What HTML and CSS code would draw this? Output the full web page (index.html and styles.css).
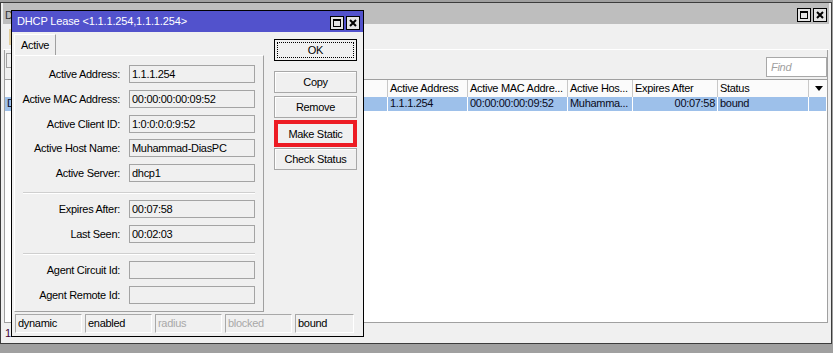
FILE: index.html
```html
<!DOCTYPE html>
<html lang="en">
<head>
    <meta charset="UTF-8">
    <title>DHCP Lease</title>
    <link rel="stylesheet" href="styles.css">
</head>
<body>

<div class="win">
    <div class="win-title">
        <span class="name">DHCP Server</span>
        <div class="tbtns">
            <span class="tb"><svg width="14" height="14"><rect x="0.5" y="0.5" width="13" height="13" fill="#e4e4e4" stroke="#000"/><rect x="3.5" y="3.5" width="7" height="7" fill="none" stroke="#000"/><line x1="3" y1="4.5" x2="11" y2="4.5" stroke="#000"/></svg></span>
            <span class="tb"><svg width="14" height="14"><rect x="0.5" y="0.5" width="13" height="13" fill="#e4e4e4" stroke="#000"/><path d="M4 4 L10 10 M10 4 L4 10" stroke="#000" stroke-width="2"/></svg></span>
        </div>
    </div>
    <div class="win-tabs"><span class="wtab"></span></div>
    <div class="page">
        <div class="toolbar">
            <span class="tool"></span>
            <span class="find">Find</span>
        </div>
        <div class="list">
            <div class="lrow head">
                <div class="c"></div>
                <div class="c">Active Address</div>
                <div class="c">Active MAC Addre...</div>
                <div class="c">Active Hos...</div>
                <div class="c">Expires After</div>
                <div class="c">Status</div>
                <div class="c arrow"><span class="tri"></span></div>
            </div>
            <div class="lrow sel">
                <div class="c">D</div>
                <div class="c">1.1.1.254</div>
                <div class="c">00:00:00:00:09:52</div>
                <div class="c">Muhamma...</div>
                <div class="c num">00:07:58</div>
                <div class="c">bound</div>
                <div class="c"></div>
            </div>
        </div>
    </div>
    <div class="win-status">1</div>
</div>

<div class="dlg">
    <div class="dlg-title">
        <span class="name">DHCP Lease &lt;1.1.1.254,1.1.1.254&gt;</span>
        <div class="tbtns">
            <span class="tb"><svg width="14" height="14"><rect x="0.5" y="0.5" width="13" height="13" fill="#e4e4e4" stroke="#000"/><rect x="3.5" y="3.5" width="7" height="7" fill="none" stroke="#000"/><line x1="3" y1="4.5" x2="11" y2="4.5" stroke="#000"/></svg></span>
            <span class="tb"><svg width="14" height="14"><rect x="0.5" y="0.5" width="13" height="13" fill="#e4e4e4" stroke="#000"/><path d="M4 4 L10 10 M10 4 L4 10" stroke="#000" stroke-width="2"/></svg></span>
        </div>
    </div>
    <div class="dlg-body">
        <div class="pane">
            <div class="tabs"><span class="tab">Active</span></div>
            <div class="panel">
                <div class="field"><label>Active Address:</label><span class="val">1.1.1.254</span></div>
                <div class="field"><label>Active MAC Address:</label><span class="val">00:00:00:00:09:52</span></div>
                <div class="field"><label>Active Client ID:</label><span class="val">1:0:0:0:0:9:52</span></div>
                <div class="field"><label>Active Host Name:</label><span class="val">Muhammad-DiasPC</span></div>
                <div class="field"><label>Active Server:</label><span class="val">dhcp1</span></div>
                <div class="sep"></div>
                <div class="field"><label>Expires After:</label><span class="val">00:07:58</span></div>
                <div class="field"><label>Last Seen:</label><span class="val">00:02:03</span></div>
                <div class="sep"></div>
                <div class="field"><label>Agent Circuit Id:</label><span class="val"></span></div>
                <div class="field"><label>Agent Remote Id:</label><span class="val"></span></div>
            </div>
        </div>
        <div class="btns">
            <button class="ok">OK</button>
            <button class="first">Copy</button>
            <button>Remove</button>
            <button class="marked">Make Static</button>
            <button class="after">Check Status</button>
        </div>
        <div class="dstatus">
            <span>dynamic</span>
            <span>enabled</span>
            <span class="off">radius</span>
            <span class="off">blocked</span>
            <span>bound</span>
        </div>
    </div>
</div>

</body>
</html>
```

FILE: styles.css
```css
* { box-sizing: border-box; }
body { margin: 0; height: 353px; overflow: hidden; position: relative; background: #a0a0a0; font-family: "Liberation Sans", Arial, sans-serif; font-size: 11px; letter-spacing: -0.3px; color: #000; }

/* background window */
.win { margin-top: 2px; width: 832px; height: 342px; border: 1px solid #3c3c3c; background: #f0f0f0; padding: 0 2px; display: flex; flex-direction: column; }
.win-title { height: 21px; flex: none; background: #bebebe; color: #333; display: flex; justify-content: space-between; align-items: flex-end; padding: 0 2px 2px 2px; }
.win-title .name { white-space: nowrap; line-height: 13px; }
.dlg-title .name { align-self: center; white-space: nowrap; }
.tbtns { display: flex; gap: 2px; }
.tb { width: 14px; height: 14px; display: block; }
.tb svg { display: block; }
.win-tabs { height: 26px; flex: none; border-bottom: 1px solid #fff; padding: 5px 0 0 6px; }
.wtab { display: inline-block; width: 40px; height: 16px; border-left: 2px solid #e3cf9c; border-right: 1px solid #a0a0a0; }
.page { flex: 1; margin: 0 1px; border: 1px solid #a0a0a0; border-top: none; display: flex; flex-direction: column; }
.toolbar { height: 29px; flex: none; display: flex; justify-content: space-between; align-items: flex-end; padding-bottom: 2px; }
.tool { align-self: flex-start; margin: 3px 0 0 1px; width: 22px; height: 15px; border: 1px solid #a0a0a0; position: relative; }
.tool::before { content: ""; position: absolute; left: 4px; top: 9px; width: 2px; height: 2px; background: #000; }
.find { width: 61px; height: 20px; background: #fff; border: 1px solid #a8a8a8; color: #a0a0a0; font-style: italic; padding: 2px 4px; line-height: 14px; }
.list { flex: 1; background: #fff; border-top: 1px solid #a0a0a0; }
.lrow { display: grid; grid-template-columns: 383px 80px 100px 65px 85px 91px 1fr; }
.lrow .c { padding-left: 2px; white-space: nowrap; overflow: hidden; border-right: 1px solid #fff; }
.head { height: 17px; background: #fbfbfb; line-height: 17px; }
.head .c { border-right-color: #c8c8c8; }
.head .arrow { border-right: none; display: flex; align-items: center; justify-content: center; }
.tri { width: 0; height: 0; border-left: 4px solid transparent; border-right: 4px solid transparent; border-top: 5px solid #000; }
.sel { height: 14px; background: #9dc0ea; line-height: 13px; color: #0a0a20; }
.sel .num { text-align: right; padding-right: 2px; }
.win-status { height: 20px; flex: none; padding-left: 2px; line-height: 20px; color: #400030; }

/* lease dialog */
.dlg { position: absolute; left: 11px; top: 10px; width: 353px; height: 327px; border: 1px solid #000; background: #f0f0f0; }
.dlg-title { height: 21px; background: #5252cc; color: #fff; letter-spacing: -0.15px; display: flex; justify-content: space-between; align-items: flex-end; padding: 0 3px 2px 5px; }
.dlg-body { display: grid; grid-template-columns: 250px 83px; column-gap: 10px; padding: 2px 0 0 2px; }
.tabs { height: 21px; display: flex; }
.tab { height: 21px; padding: 0 6px; line-height: 20px; border-top: 1px solid #fff; border-left: 1px solid #fff; border-right: 1px solid #a0a0a0; }
.panel { height: 257px; border: 1px solid #fff; border-right-color: #a0a0a0; border-bottom-color: #a0a0a0; padding-top: 9px; }
.field { display: grid; grid-template-columns: 107px 126px; column-gap: 7px; height: 18px; align-items: center; }
.field + .field { margin-top: 6.75px; }
.field label { text-align: right; padding-right: 2px; white-space: nowrap; }
.val { height: 18px; border: 1px solid #a4a4a4; padding-left: 2px; line-height: 16px; white-space: nowrap; }
.sep { height: 2px; width: 232px; margin: 10px 0 6px 8px; border-top: 1px solid #cfcfcf; border-bottom: 1px solid #fff; }
.btns { display: flex; flex-direction: column; padding-top: 5px; }
.btns button { height: 22px; margin: 0; padding: 0; font: inherit; letter-spacing: inherit; color: #000; background: #f0f0f0; border: 1px solid #a8a8a8; box-shadow: inset 1px 1px #fff; }
.btns .ok { border-color: #000; outline: 1px dotted #000; outline-offset: -4px; box-shadow: none; }
.btns .first { margin-top: 10px; }
.btns button + button:not(.first) { margin-top: 3px; }
.btns .marked { height: 27px; margin-top: 2px !important; border: 4px solid #ed1c24; box-shadow: none; }
.btns .after { margin-top: 1px !important; }
.dstatus { grid-column: 1 / -1; margin-top: 2px; padding: 0 3px 0 1px; display: grid; grid-template-columns: repeat(4, 67px) 1fr; column-gap: 3px; }
.dstatus span { height: 19px; line-height: 17px; padding-left: 2px; border: 1px solid #fff; border-top-color: #a8a8a8; border-left-color: #a8a8a8; }
.dstatus .off { color: #a8a8a8; }
```
